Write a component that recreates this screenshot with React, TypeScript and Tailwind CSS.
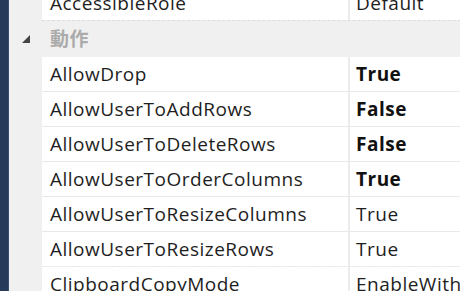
const rows: { name: string; value: string; bold?: boolean; dashed?: boolean }[] = [
  { name: 'AllowDrop', value: 'True', bold: true },
  { name: 'AllowUserToAddRows', value: 'False', bold: true },
  { name: 'AllowUserToDeleteRows', value: 'False', bold: true },
  { name: 'AllowUserToOrderColumns', value: 'True', bold: true },
  { name: 'AllowUserToResizeColumns', value: 'True' },
  { name: 'AllowUserToResizeRows', value: 'True', dashed: true },
  { name: 'ClipboardCopyMode', value: 'EnableWithoutHeaderText' },
];

function Row({ name, value, bold, dashed }: { name: string; value: string; bold?: boolean; dashed?: boolean }) {
  return (
    <div
      className={`flex h-[35px] shrink-0 border-b border-[#e9e9e9] ${dashed ? 'border-dashed' : ''}`}
    >
      <div className="w-[306px] shrink-0 bg-white pl-2 flex items-center whitespace-nowrap overflow-hidden">
        {name}
      </div>
      <div className="w-[2px] shrink-0 bg-[#ececec]" />
      <div
        className={`flex-1 bg-white pl-[6px] flex items-center whitespace-nowrap overflow-hidden ${
          bold ? 'font-bold text-[#111]' : ''
        }`}
      >
        {value}
      </div>
    </div>
  );
}

export default function App() {
  return (
    <div
      className="flex h-[291px] w-[460px] overflow-hidden bg-[#f0f0f0] text-[19px] tracking-[0.5px] text-[#1e1e1e]"
      style={{ fontFamily: '"Open Sans", "Noto Sans CJK JP", sans-serif' }}
    >
      {/* window edge */}
      <div className="w-[8px] shrink-0 bg-[#263a5c]" />
      <div className="w-[1px] shrink-0 bg-[#3a4e72]" />

      <div className="flex-1 flex flex-col -mt-[14px]">
        {/* previous row, cut off at the top */}
        <div className="flex h-[35px] shrink-0 border-b border-dashed border-[#dcdcdc] ml-[33px]">
          <div className="w-[306px] shrink-0 bg-white pl-2 flex items-center whitespace-nowrap">
            AccessibleRole
          </div>
          <div className="w-[2px] shrink-0 bg-[#ececec]" />
          <div className="flex-1 bg-white pl-[6px] flex items-center">Default</div>
        </div>

        {/* category */}
        <div className="flex h-[36px] shrink-0 items-center">
          <div className="w-[33px] shrink-0 flex justify-center pl-[2px]">
            <svg width="9" height="9" viewBox="0 0 9 9">
              <polygon points="8,0 8,8 0,8" fill="#444" />
            </svg>
          </div>
          <div className="pl-2 font-bold text-[#ababab]">動作</div>
        </div>

        <div className="ml-[33px] flex flex-col shrink-0">
          {rows.map((r) => (
            <Row key={r.name} {...r} />
          ))}
        </div>
      </div>
    </div>
  );
}
